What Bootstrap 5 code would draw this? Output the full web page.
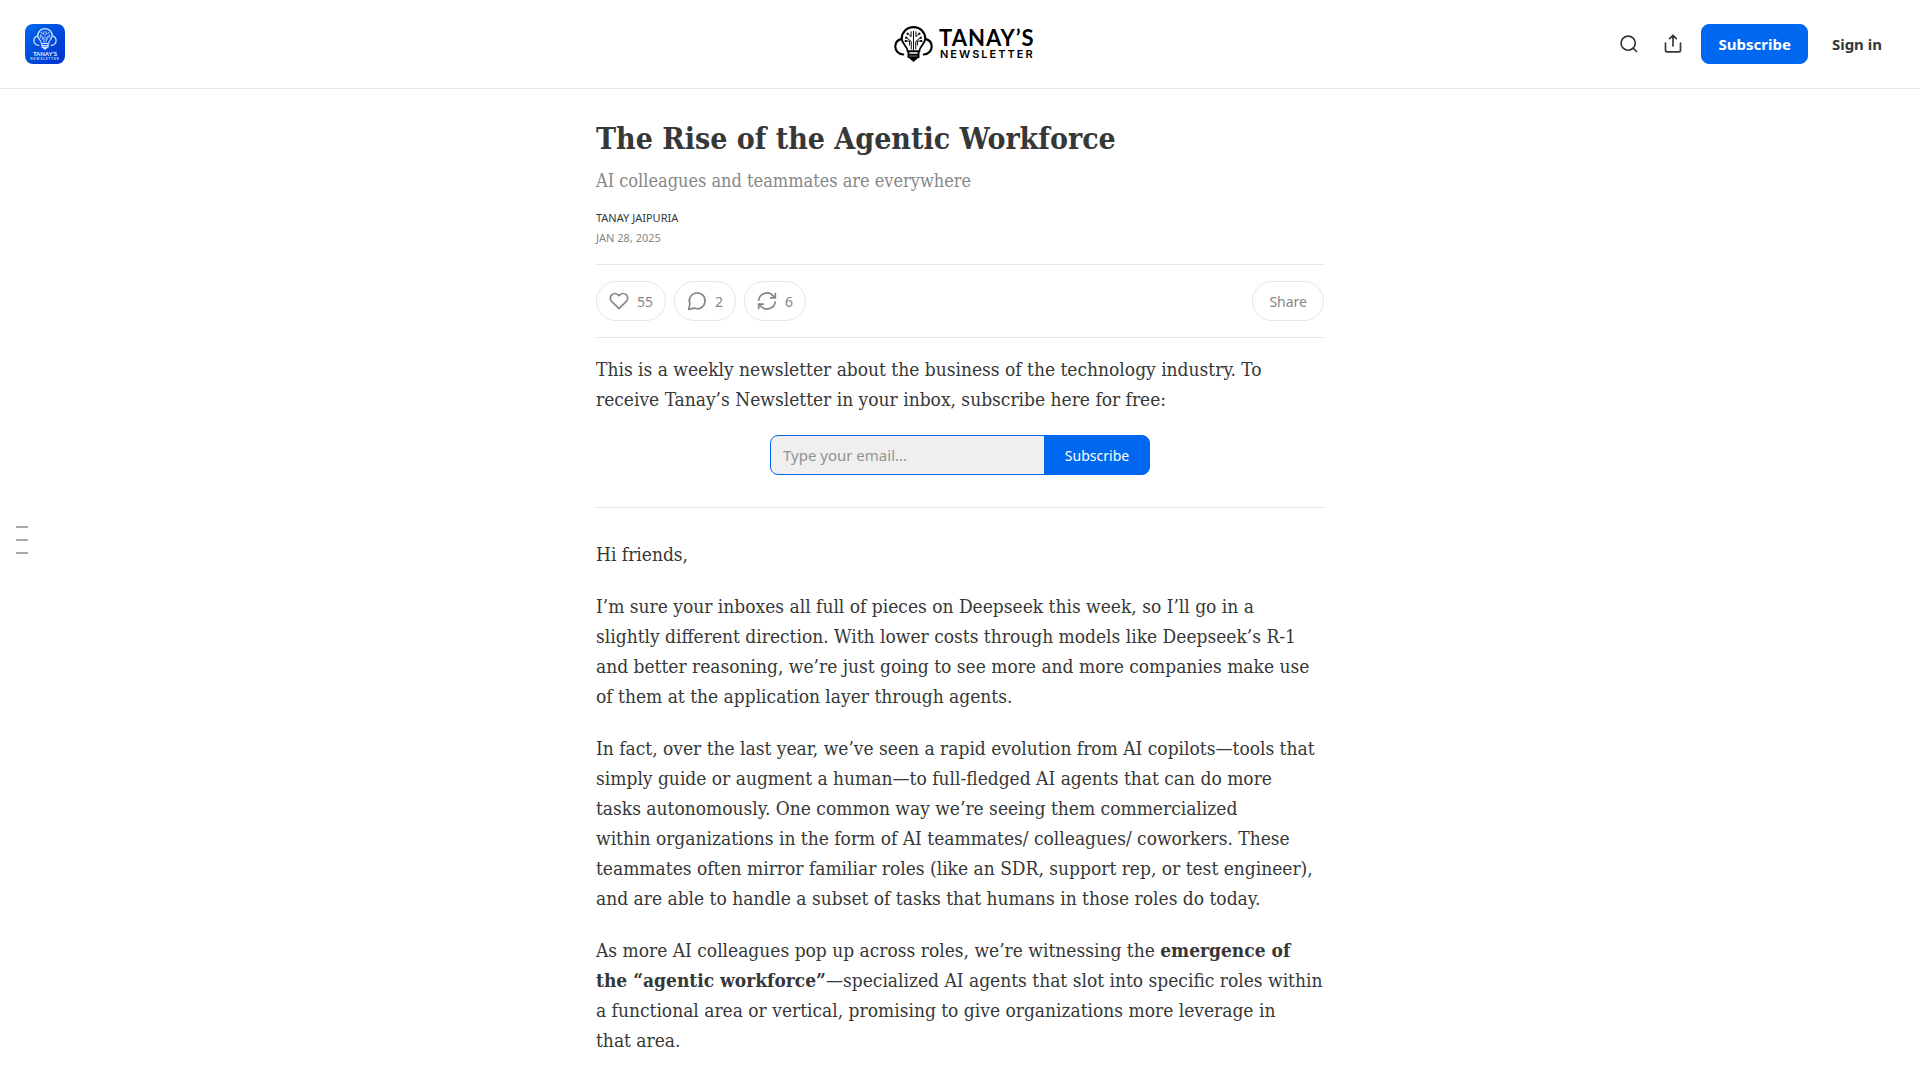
<!DOCTYPE html>
<html lang="en">
<head>
<meta charset="utf-8">
<meta name="viewport" content="width=device-width, initial-scale=1">
<title>The Rise of the Agentic Workforce</title>
<link href="https://cdn.jsdelivr.net/npm/bootstrap@5.3.0/dist/css/bootstrap.min.css" rel="stylesheet">
<style>
  :root { --ink: #363737; --muted: #868787; --line: #e6e6e6; --accent: #0068f0; }
  body { font-family: "Noto Sans", sans-serif; color: var(--ink); background: #fff; }
  a { color: inherit; text-decoration: none; }
  .topbar { height: 89px; border-bottom: 1px solid var(--line); }
  .topbar-side { flex: 1 1 0; }
  .icon-btn { width: 40px; height: 40px; color: var(--ink); }
  .btn-accent { --bs-btn-color: #fff; --bs-btn-bg: var(--accent); --bs-btn-border-color: var(--accent); --bs-btn-hover-color: #fff; --bs-btn-hover-bg: #005bd3; --bs-btn-hover-border-color: #005bd3; }
  .head-btn { height: 40px; padding: 0 16px; font-size: 15px; font-weight: 700; border-radius: 8px; }
  .sign-in { padding: 0 14px 0 16px; }
  .post { max-width: 728px; }
  .slab { font-family: "Roboto Slab", "DejaVu Serif Condensed", "DejaVu Serif", serif; }
  .post-title { font-size: 30px; line-height: 36px; font-weight: 700; }
  .post-subtitle { font-size: 18px; line-height: 24px; color: var(--muted); margin-bottom: 15px; }
  .meta { font-size: 11px; line-height: 20px; text-transform: uppercase; }
  .muted { color: var(--muted); }
  .actions { border-top: 1px solid var(--line); border-bottom: 1px solid var(--line); padding: 16px 0; }
  .pill { height: 40px; padding: 0 12px; border: 1px solid var(--line); font-size: 14px; color: var(--muted); background: #fff; }
  .pill-wide { padding: 0 16px; }
  .story { font-size: 19px; line-height: 30px; }
  .story p { margin-bottom: 22px; }
  .signup { width: 380px; height: 40px; margin-bottom: 32px; }
  .story .intro { margin-bottom: 21px; }
  .signup .form-control { border-color: var(--accent); border-radius: 8px 0 0 8px; background: #efefef; font-size: 15px; padding: 0 12px; }
  .signup .form-control::placeholder { color: #929292; }
  .signup .btn { width: 106px; font-size: 14px; border-radius: 0 8px 8px 0; padding: 0; }
  .rule { border-top: 1px solid var(--line); margin-bottom: 31px; }
  .toc { left: 16px; top: 526px; gap: 11px; }
  .toc span { width: 12px; height: 2px; background: #a9a9a9; }
</style>
<script src="https://cdn.jsdelivr.net/npm/bootstrap@5.3.0/dist/js/bootstrap.bundle.min.js" defer></script>
</head>
<body>
<svg class="d-none" aria-hidden="true">
  <symbol id="bulb" viewBox="0 0 40 37" fill="none" stroke="currentColor">
    <path stroke-width="2.2" stroke-linecap="round" d="M9.500 29.300C4.600 29 1.300 25.300 1.300 21C1.300 17 4 14.200 7.800 13.200C8 6.600 13 1.200 20 1.200S32 6.600 32.200 13.200C36 14.200 38.700 17 38.700 21C38.700 25.300 35.400 29 30.500 29.300"/>
    <path stroke-width="1.900" d="M8 13.500C8.300 19 13.500 20 14 26H26C26.500 20 31.700 19 32 13.500M14.800 27V32H25.200V27M15 29.500H25"/>
    <path fill="currentColor" stroke="none" d="M14.500 32H25.500L23 34.500L20 37L17 34.500Z"/>
    <path stroke-width="1" d="M20 5V25M17.500 5.500V11L14.500 8M22.500 5.500V11L25.500 8M17.700 24V16L13 12M22.300 24V16L27 12M12 15.500H16V20M28 15.500H24V20"/>
    <path fill="currentColor" stroke="none" d="M13 7h2v2h-2zM25 7h2v2h-2zM11.500 11h2v2h-2zM26.500 11h2v2h-2zM11 14.500h2v2h-2zM27 14.500h2v2h-2z"/>
  </symbol>
</svg>

<header class="topbar d-flex align-items-center ps-4 pe-4">
  <div class="topbar-side d-flex">
    <a href="#" class="d-block" aria-label="Tanay's Newsletter home">
      <svg class="d-block" width="42" height="40" viewBox="0 0 42 40">
        <defs><linearGradient id="sky" x1="0" y1="0" x2="1" y2="1"><stop offset="0" stop-color="#0068ee"/><stop offset="1" stop-color="#0030cc"/></linearGradient></defs>
        <rect x="1" width="40" height="40" rx="8" fill="url(#sky)"/>
        <g color="#d4e6ff"><use href="#bulb" x="9" y="4" width="24" height="22"/></g>
        <text x="21" y="32" text-anchor="middle" fill="#e8f1ff" font-family="Lato, sans-serif" font-weight="700" font-size="6">TANAY’S</text>
        <text x="21" y="36" text-anchor="middle" fill="#d4e6ff" font-family="Lato, sans-serif" font-weight="700" font-size="3" letter-spacing="1">NEWSLETTER</text>
      </svg>
    </a>
  </div>
  <a href="#" class="text-black" aria-label="Tanay's Newsletter">
    <svg class="d-block" width="156" height="40" viewBox="0 0 156 40">
      <use href="#bulb" x="12" y="2" width="39" height="36"/>
      <text x="57" y="22" fill="currentColor" font-family="Lato, sans-serif" font-weight="700" font-size="22" letter-spacing="1">TANAY’S</text>
      <text x="58" y="34" fill="currentColor" font-family="Inter, sans-serif" font-weight="600" font-size="11" letter-spacing="2">NEWSLETTER</text>
    </svg>
  </a>
  <div class="topbar-side d-flex justify-content-end align-items-center">
    <button type="button" class="icon-btn btn border-0 p-0 d-flex align-items-center justify-content-center" aria-label="Search">
      <svg width="20" height="20" viewBox="0 0 24 24" fill="none" stroke="currentColor" stroke-width="2" stroke-linecap="round"><circle cx="11" cy="11" r="8.500"/><path d="M21 21l-4-4"/></svg>
    </button>
    <button type="button" class="icon-btn btn border-0 p-0 ms-1 me-2 d-flex align-items-center justify-content-center" aria-label="Share post">
      <svg width="20" height="20" viewBox="0 0 24 24" fill="none" stroke="currentColor" stroke-width="2" stroke-linecap="round" stroke-linejoin="round"><path d="M3 11v8.500a2 2 0 0 0 2 2h14a2 2 0 0 0 2-2V11M12 14.500V2M8 5.500L12 1.500L16 5.500"/></svg>
    </button>
    <button type="button" class="btn btn-accent head-btn">Subscribe</button>
    <button type="button" class="btn head-btn sign-in border-0 ms-2 text-reset">Sign in</button>
  </div>
</header>

<nav class="toc position-fixed d-flex flex-column" aria-label="Table of contents"><span></span><span></span><span></span></nav>

<main class="post mx-auto">
  <h1 class="post-title slab mb-0 pt-4 mt-2">The Rise of the Agentic Workforce</h1>
  <h2 class="post-subtitle slab fw-normal mt-2 pt-1">AI colleagues and teammates are everywhere</h2>
  <div class="meta pb-3"><a href="#" class="d-block">Tanay Jaipuria</a><time class="d-block muted" datetime="2025-01-28">Jan 28, 2025</time></div>
  <div class="actions d-flex gap-2">
    <button type="button" class="pill rounded-pill d-flex align-items-center gap-2" aria-label="Like, 55">
      <svg width="20" height="20" viewBox="0 0 24 24" fill="none" stroke="currentColor" stroke-width="2" stroke-linejoin="round"><path d="M20.840 4.610a5.500 5.500 0 0 0-7.780 0L12 5.670l-1.060-1.060a5.500 5.500 0 0 0-7.780 7.780L12 21.230l8.840-8.840a5.500 5.500 0 0 0 0-7.780z"/></svg>
      <span>55</span>
    </button>
    <button type="button" class="pill rounded-pill d-flex align-items-center gap-2" aria-label="Comments, 2">
      <svg width="20" height="20" viewBox="0 0 24 24" fill="none" stroke="currentColor" stroke-width="2" stroke-linejoin="round"><path d="M2 22L3.500 15.500A9.500 9.500 0 1 1 8.500 20.500Z"/></svg>
      <span>2</span>
    </button>
    <button type="button" class="pill rounded-pill d-flex align-items-center gap-2" aria-label="Restacks, 6">
      <svg width="20" height="20" viewBox="0 0 24 24" fill="none" stroke="currentColor" stroke-width="2"><path d="M2 11.500A10 10 0 0 1 20 6.500L21.500 8M22 2V8.300H15.500M22 12.500A10 10 0 0 1 4 17.500L2.500 16M2 22V15.700H8.500"/></svg>
      <span>6</span>
    </button>
    <button type="button" class="pill pill-wide rounded-pill ms-auto">Share</button>
  </div>
  <div class="story slab pt-3">
    <p class="intro">This is a weekly newsletter about the business of the technology industry. To<br>receive Tanay’s Newsletter in your inbox, subscribe here for free:</p>
  </div>
  <form class="signup input-group mx-auto flex-nowrap">
    <input type="email" class="form-control shadow-none" placeholder="Type your email..." aria-label="Email address">
    <button type="submit" class="btn btn-accent">Subscribe</button>
  </form>
  <div class="rule"></div>
  <article class="story slab">
    <p>Hi friends,</p>
    <p>I’m sure your inboxes all full of pieces on Deepseek this week, so I’ll go in a<br>slightly different direction. With lower costs through models like Deepseek’s R-1<br>and better reasoning, we’re just going to see more and more companies make use<br>of them at the application layer through agents.</p>
    <p>In fact, over the last year, we’ve seen a rapid evolution from AI copilots—tools that<br>simply guide or augment a human—to full-fledged AI agents that can do more<br>tasks autonomously. One common way we’re seeing them commercialized<br>within organizations in the form of AI teammates/ colleagues/ coworkers. These<br>teammates often mirror familiar roles (like an SDR, support rep, or test engineer),<br>and are able to handle a subset of tasks that humans in those roles do today.</p>
    <p class="mb-0">As more AI colleagues pop up across roles, we’re witnessing the <strong>emergence of<br>the “agentic workforce”</strong>—specialized AI agents that slot into specific roles within<br>a functional area or vertical, promising to give organizations more leverage in<br>that area.</p>
  </article>
</main>
</body>
</html>
